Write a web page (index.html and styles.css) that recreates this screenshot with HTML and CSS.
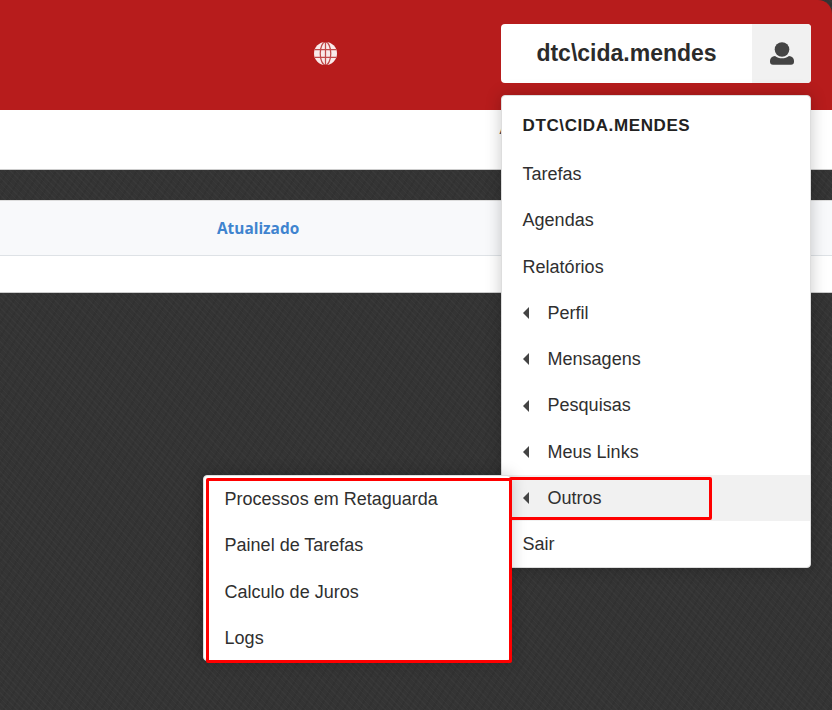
FILE: index.html
```html
<!DOCTYPE html>
<html lang="pt">
<head>
  <meta charset="UTF-8">
  <title>Menu do usuario</title>
  <link rel="stylesheet" href="styles.css">
</head>
<body>
  <header class="top-header">
    <svg class="globe-icon" viewBox="0 0 24 24" aria-hidden="true">
      <circle cx="12" cy="12" r="12" fill="#f9eaea"/>
      <g fill="none" stroke="#c14a4a" stroke-width="1.300">
        <ellipse cx="12" cy="12" rx="5.500" ry="12"/>
        <path d="M12 0v24M1 8h22M1 16h22"/>
      </g>
    </svg>
    <div class="user-box">
      <span class="user-name">dtc\cida.mendes</span>
      <span class="user-icon">
        <svg viewBox="0 0 24 24" width="24" height="24" aria-hidden="true">
          <circle cx="12" cy="7.500" r="7.300" fill="#444"/>
          <path d="M3 22.800h18a3 3 0 0 0 3-3v-1c0-2.500-2-4.500-5-4.800-2 1.500-4.300 2.300-7 2.300s-5-.8-7-2.300c-3 .3-5 2.300-5 4.800v1a3 3 0 0 0 3 3z" fill="#444"/>
        </svg>
      </span>
    </div>
  </header>

  <div class="sub-bar"><span class="sub-link">A</span></div>

  <section class="grid-panel">
    <div class="grid-head"><a class="grid-title">Atualizado</a></div>
    <div class="grid-row"></div>
  </section>

  <nav class="user-menu">
    <div class="menu-title">DTC\CIDA.MENDES</div>
    <a class="menu-item">Tarefas</a>
    <a class="menu-item">Agendas</a>
    <a class="menu-item">Relatórios</a>
    <a class="menu-item has-sub"><i class="caret"></i>Perfil</a>
    <a class="menu-item has-sub"><i class="caret"></i>Mensagens</a>
    <a class="menu-item has-sub"><i class="caret"></i>Pesquisas</a>
    <a class="menu-item has-sub"><i class="caret"></i>Meus Links</a>
    <a class="menu-item has-sub active"><i class="caret"></i>Outros</a>
    <a class="menu-item">Sair</a>
  </nav>

  <nav class="sub-menu">
    <a class="menu-item">Processos em Retaguarda</a>
    <a class="menu-item">Painel de Tarefas</a>
    <a class="menu-item">Calculo de Juros</a>
    <a class="menu-item">Logs</a>
  </nav>

  <div class="mark mark-item"></div>
  <div class="mark mark-sub"></div>
</body>
</html>
```

FILE: styles.css
```css
html, body {
  height: 100%;
  margin: 0;
  padding: 0;
  overflow: hidden;
}

body {
  position: relative;
  font-family: "Liberation Sans", Arial, sans-serif;
  color: #212529;
  background-color: #343434;
  background-image:
    repeating-linear-gradient(45deg, rgba(255,255,255,0.025) 0 1px, transparent 1px 4px),
    repeating-linear-gradient(120deg, rgba(0,0,0,0.06) 0 2px, transparent 2px 7px);
}

.top-header {
  height: 110px;
  background: #b71c1c;
  border-top-right-radius: 14px;
  display: flex;
  align-items: flex-start;
  justify-content: flex-end;
  box-sizing: border-box;
  padding: 24px 21px 0 0;
}

.globe-icon {
  width: 23px;
  height: 23px;
  margin: 18px 164px 0 0;
}

.user-box {
  width: 310px;
  height: 59px;
  display: flex;
  background: #fff;
  border-radius: 4px;
  overflow: hidden;
}

.user-name {
  flex: 1;
  text-align: center;
  line-height: 59px;
  font-size: 23px;
  font-weight: bold;
  color: #2b2b2b;
}

.user-icon {
  width: 59px;
  background: #f1f1f1;
  display: flex;
  align-items: center;
  justify-content: center;
}

.sub-bar {
  height: 59px;
  background: #fff;
  border-bottom: 1px solid #ccc;
  padding-left: 499.500px;
  line-height: 38px;
}

.sub-link {
  font-size: 16px;
  color: #444;
}

.grid-panel {
  margin-top: 30px;
  background: #fff;
  border-top: 1px solid #ddd;
  border-bottom: 1px solid #ccc;
}

.grid-head {
  height: 54px;
  line-height: 55px;
  background: #f8f9fb;
  border-bottom: 1px solid #dee2e6;
  padding-left: 217px;
}

.grid-title {
  font-family: "Open Sans", sans-serif;
  font-size: 15.400px;
  font-weight: bold;
  color: #3f84cf;
}

.grid-row {
  height: 36px;
}

.user-menu, .sub-menu {
  position: absolute;
  background: #fff;
  border: 1px solid #ddd;
  border-radius: 4px;
  box-shadow: 0 0 16px rgba(0,0,0,0.22);
  box-sizing: border-box;
}

.user-menu {
  top: 95px;
  left: 501px;
  width: 310px;
  height: 473px;
  padding-top: 7px;
}

.menu-title {
  font-size: 17px;
  font-weight: bold;
  letter-spacing: 0.600px;
  line-height: 46px;
  margin-bottom: 2px;
  padding-left: 20.600px;
  color: #222;
}

.menu-item {
  display: block;
  height: 46.300px;
  line-height: 46.300px;
  font-size: 18px;
  padding-left: 20.600px;
  color: #2f2f2f;
}

.menu-item.has-sub {
  display: flex;
  align-items: center;
}

.menu-item.active {
  background: #f1f1f1;
}

.caret {
  width: 0;
  height: 0;
  border-style: solid;
  border-width: 6px 6px 6px 0;
  border-color: transparent #444 transparent transparent;
  margin-right: 19px;
}

.sub-menu {
  top: 475px;
  left: 203px;
  width: 308px;
  height: 186px;
}

.mark {
  position: absolute;
  border: 3px solid #f00;
  box-sizing: border-box;
  border-radius: 2px;
}

.mark-item {
  top: 477px;
  left: 509px;
  width: 203px;
  height: 43px;
}

.mark-sub {
  top: 478px;
  left: 206px;
  width: 306px;
  height: 185px;
}
```
